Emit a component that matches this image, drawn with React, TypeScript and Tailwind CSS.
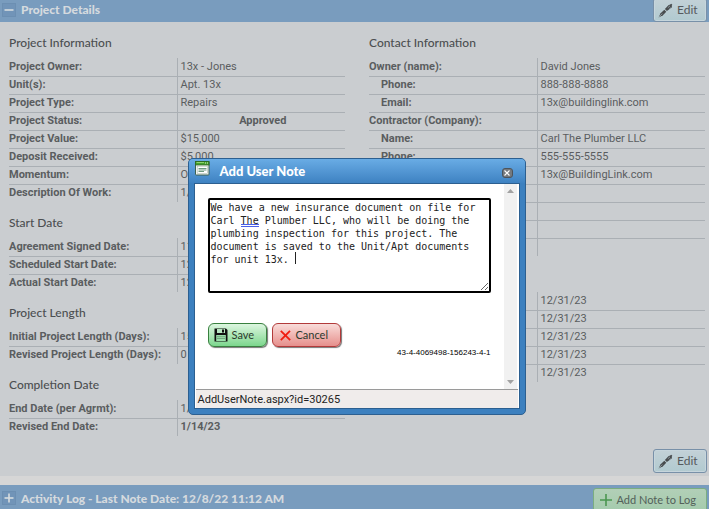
import { useState, type ReactNode } from 'react';

type Row = {
  label: string;
  value?: string;
  indent?: boolean;
  strong?: boolean;
  centered?: boolean;
};

const projectInfo: Row[] = [
  { label: 'Project Owner:', value: '13x - Jones' },
  { label: 'Unit(s):', value: 'Apt. 13x' },
  { label: 'Project Type:', value: 'Repairs' },
  { label: 'Project Status:', value: 'Approved', strong: true, centered: true },
  { label: 'Project Value:', value: '$15,000' },
  { label: 'Deposit Received:', value: '$5,000' },
  { label: 'Momentum:', value: 'O' },
  { label: 'Description Of Work:', value: '1/' },
];

const startDate: Row[] = [
  { label: 'Agreement Signed Date:', value: '11' },
  { label: 'Scheduled Start Date:', value: '12' },
  { label: 'Actual Start Date:', value: '12' },
];

const projectLength: Row[] = [
  { label: 'Initial Project Length (Days):', value: '15' },
  { label: 'Revised Project Length (Days):', value: '0' },
];

const completionDate: Row[] = [
  { label: 'End Date (per Agrmt):', value: '1/' },
  { label: 'Revised End Date:', value: '1/14/23', strong: true },
];

const contactInfo: Row[] = [
  { label: 'Owner (name):', value: 'David Jones' },
  { label: 'Phone:', value: '888-888-8888', indent: true },
  { label: 'Email:', value: '13x@buildinglink.com', indent: true },
  { label: 'Contractor (Company):' },
  { label: 'Name:', value: 'Carl The Plumber LLC', indent: true },
  { label: 'Phone:', value: '555-555-5555', indent: true },
  { label: 'Email:', value: '13x@BuildingLink.com', indent: true },
  { label: '' },
  { label: '' },
  { label: '' },
  { label: '' },
];

const expirations: Row[] = [
  { label: '', value: '12/31/23' },
  { label: '', value: '12/31/23' },
  { label: '', value: '12/31/23' },
  { label: '', value: '12/31/23' },
  { label: '', value: '12/31/23' },
];

const NOTE = [
  'We have a new insurance document on file for',
  'Carl The Plumber LLC, who will be doing the',
  'plumbing inspection for this project. The',
  'document is saved to the Unit/Apt documents',
  'for unit 13x. ',
].join('\n');

function PenIcon() {
  return (
    <svg width="15" height="15" viewBox="0 0 15 15" fill="#484c4e">
      <path d="M0.6 14.4 2.6 10.2 6.3 6.8 8.3 8.8 4.9 12.2Z" />
      <path d="M6.9 6.1 10.4 2.2 12.2 1.4 13.2 0.7 14.3 1.8 13.7 2.8 14 4.2 8.9 8.1Z" />
      <path d="M1 14 4.3 10.6" stroke="#b4c8d0" strokeWidth="0.6" />
      <path d="M9.8 4.8 12 2.8M11.2 6.2 13 4.6" stroke="#a9b8be" strokeWidth="0.7" />
    </svg>
  );
}

function EditButton() {
  return (
    <button className="flex h-6 w-[54px] items-center gap-1 rounded-[3px] border border-[#7890a8] bg-linear-to-b from-[#c3d1d7] to-[#b1cad0] pl-1 font-[Lato,sans-serif] text-[12px] text-[#55595c] shadow-[inset_0_0_0_1px_#c6d5dc]">
      <PenIcon />
      Edit
    </button>
  );
}

function ToggleButton({ open, label }: { open: boolean; label: string }) {
  return (
    <button
      aria-label={label}
      className="flex size-[14px] items-center justify-center border border-[#6c8fb2] bg-[#7194b8]"
    >
      <svg width="10" height="10" viewBox="0 0 10 10" stroke="#d8dcdf" strokeWidth="1.6">
        <path d="M0.5 5H9.5" />
        {!open && <path d="M5 0.5V9.5" />}
      </svg>
    </button>
  );
}

function DetailTable({ rows, title }: { rows: Row[]; title?: string }) {
  return (
    <section>
      <h3 className="h-9 pt-[13px] font-[Lato,sans-serif] text-[12px] leading-4 font-medium text-[#4c4f51]">
        {title}
      </h3>
      <table className="w-full table-fixed border-collapse font-[Roboto,Arial,sans-serif] text-[11px] leading-4 text-[#5a5d5f]">
        <tbody>
          {rows.map((row, i) => (
            <tr key={i} className="h-[18px] border-b border-[#aaafb4] last:border-b-0">
              <th
                scope="row"
                className={`w-1/2 border-r border-[#aaafb4] p-0 text-left font-bold whitespace-nowrap ${row.indent ? 'pl-3' : ''}`}
              >
                {row.label}
              </th>
              <td
                className={`p-0 pl-[3px] whitespace-nowrap ${row.strong ? 'font-bold' : ''} ${row.centered ? 'text-center' : ''}`}
              >
                {row.value}
              </td>
            </tr>
          ))}
        </tbody>
      </table>
    </section>
  );
}

function DialogButton({
  children,
  className,
}: {
  children: ReactNode;
  className: string;
}) {
  return (
    <button
      className={`flex h-6 items-center rounded-md border font-[Lato,sans-serif] text-[11px] text-[#2c3a2e] shadow-[1px_1px_1px_#777] ${className}`}
    >
      {children}
    </button>
  );
}

function WindowIcon() {
  return (
    <svg width="15" height="15" viewBox="0 0 15 15">
      <rect x="0.5" y="0.5" width="13.5" height="13.5" rx="0.8" fill="#f3f7f3" stroke="#3c6150" />
      <rect x="0.5" y="0.5" width="13.5" height="3.4" fill="#43a22b" stroke="#2f6d24" />
      <path d="M1.5 1.5H9" stroke="#8ed36c" />
      <path d="M10 2h1M12 2h1" stroke="#d9f4cf" />
      <rect x="2.2" y="5.2" width="10.2" height="7.4" fill="#fff" stroke="#9fb0a2" strokeWidth="0.5" />
      <path d="M3.5 7.5H11.5M3.5 9H11.5M3.5 10.5H9" stroke="#6f9b80" />
    </svg>
  );
}

function SaveIcon() {
  return (
    <svg width="14" height="14" viewBox="0 0 14 14">
      <path d="M0.5 0.5H12L13.5 2V13.5H0.5Z" fill="#111" />
      <rect x="3" y="1" width="8" height="4" fill="#b8e6c1" />
      <rect x="8" y="1.5" width="2" height="3" fill="#111" />
      <rect x="2.2" y="7" width="9.6" height="6" fill="#9adfaa" />
      <path d="M3 8.7H11M3 10.5H11" stroke="#628f6b" strokeWidth="0.7" />
    </svg>
  );
}

function AddNoteDialog() {
  const [note, setNote] = useState(NOTE);

  return (
    <div
      role="dialog"
      aria-label="Add User Note"
      className="w-[338px] rounded-[5px] border border-[#2c5f90] bg-[#3c80bf] px-[5px] pb-[5px]"
    >
      <div className="-mx-[5px] flex h-6 items-center rounded-t-[4px] bg-linear-to-b from-[#69ace5] to-[#3e82c2] pr-3 pl-[6px]">
        <div className="flex h-full items-start pt-[2px]">
          <WindowIcon />
        </div>
        <h2 className="ml-[10px] flex-1 font-[Lato,sans-serif] text-[13px] leading-4 font-black text-white">
          Add User Note
        </h2>
        <button
          aria-label="Close"
          className="mt-1 flex h-[10px] w-[11px] items-center justify-center rounded-[3px] border border-[#4d545b] bg-[#74797e]"
        >
          <svg width="6" height="6" viewBox="0 0 6 6" stroke="#fff" strokeWidth="1.1">
            <path d="M0.5 0.5 5.5 5.5M5.5 0.5 0.5 5.5" />
          </svg>
        </button>
      </div>

      <div className="border border-[#2c5f90] bg-white">
        <div className="flex h-[205px]">
          <div className="min-w-0 flex-1 px-[13px] pt-[14px]">
            <div className="relative font-['DejaVu_Sans_Mono',monospace] text-[10px] leading-[13px]">
              <textarea
                aria-label="Note"
                value={note}
                onChange={(e) => setNote(e.target.value)}
                className="block h-[95px] w-full resize overflow-hidden rounded-[2px] border-2 border-black bg-white p-0 pt-px pl-px text-[#222] outline-none"
              />
              {/* Grammar mark under the flagged word */}
              <span className="absolute top-[26px] left-[3px] ml-[5ch] h-[3px] w-[3ch] border-y border-[#4a60e8]" />
              {/* Caret */}
              <span className="absolute top-[54px] left-[3px] ml-[14ch] h-3 w-px bg-[#222]" />
            </div>

            <div className="mt-[30px] flex gap-[5px]">
              <DialogButton className="w-[59px] gap-1 border-[#39803f] bg-linear-to-b from-[#dcf6e0] to-[#7bd68d] pl-[5px]">
                <SaveIcon />
                Save
              </DialogButton>
              <DialogButton className="w-[69px] gap-[5px] border-[#b23a3a] bg-linear-to-b from-[#f8dcda] to-[#e58f8c] pl-[7px]">
                <svg width="11" height="11" viewBox="0 0 11 11" stroke="#f01c10" strokeWidth="1.8">
                  <path d="M0.8 0.8 10.2 10.2M10 0.8 0.8 10.2" />
                </svg>
                Cancel
              </DialogButton>
            </div>

            <p className="text-right font-['Liberation_Sans',Arial,sans-serif] text-[8px] leading-3 text-black">
              43-4-4069498-156243-4-1
            </p>
          </div>

          {/* Scrollbar */}
          <div className="mr-[2px] flex w-[13px] flex-col items-center justify-between bg-[#f1f1f1] py-[5px]">
            <svg width="7" height="4" viewBox="0 0 7 4" fill="#a2a2a2">
              <path d="M3.5 0 7 4H0Z" />
            </svg>
            <svg width="7" height="4" viewBox="0 0 7 4" fill="#a2a2a2">
              <path d="M3.5 4 7 0H0Z" />
            </svg>
          </div>
        </div>
        <div className="mx-px h-[19px] border-t border-[#9a9a9a] bg-[#f0eceb] pl-[2px] font-[Roboto,Arial,sans-serif] text-[11px] leading-5 text-[#222]">
          AddUserNote.aspx?id=30265
        </div>
      </div>
    </div>
  );
}

export default function App() {
  return (
    <div className="relative min-h-screen overflow-hidden bg-[#d6d6d6]">
      <header className="flex h-[25px] items-start justify-between border-b border-[#6585a5] bg-[#799cbe] px-[2px]">
        <div className="flex items-center gap-[5px] pt-[1px]">
          <ToggleButton open label="Collapse project details" />
          <h2 className="font-[Lato,sans-serif] text-[12px] leading-[17px] font-black text-[#d5dade]">
            Project Details
          </h2>
        </div>
        <div className="-mt-[2px]">
          <EditButton />
        </div>
      </header>

      <main className="bg-[#cacdd0] pr-[2px] pb-[3px] pl-[9px]">
        <div className="-mt-[3px] grid grid-cols-2 gap-6 pr-[2px]">
          <div>
            <DetailTable title="Project Information" rows={projectInfo} />
            <DetailTable title="Start Date" rows={startDate} />
            <DetailTable title="Project Length" rows={projectLength} />
            <DetailTable title="Completion Date" rows={completionDate} />
          </div>
          <div>
            <DetailTable title="Contact Information" rows={contactInfo} />
            <DetailTable rows={expirations} />
          </div>
        </div>
        <div className="mt-[13px] flex justify-end">
          <EditButton />
        </div>
      </main>

      <header className="mt-[9px] flex h-[26px] items-center justify-between bg-[#799cbe] px-[2px]">
        <div className="flex items-center gap-[5px]">
          <ToggleButton open={false} label="Expand activity log" />
          <h2 className="font-[Lato,sans-serif] text-[12px] leading-[17px] font-black text-[#d5dade]">
            Activity Log - Last Note Date: 12/8/22 11:12 AM
          </h2>
        </div>
        <button className="mt-1 flex h-6 items-center gap-1 rounded-[3px] border border-[#7bad80] bg-linear-to-b from-[#b2cfb7] to-[#a4cbad] pr-[10px] pl-[6px] font-[Lato,sans-serif] text-[11px] text-[#53605a]">
          <svg width="12" height="12" viewBox="0 0 12 12" stroke="#4b9650" strokeWidth="1.6">
            <path d="M6 0V12M0 6H12" />
          </svg>
          Add Note to Log
        </button>
      </header>

      <div className="absolute inset-x-0 top-[158px] flex justify-center pl-1">
        <AddNoteDialog />
      </div>
    </div>
  );
}
